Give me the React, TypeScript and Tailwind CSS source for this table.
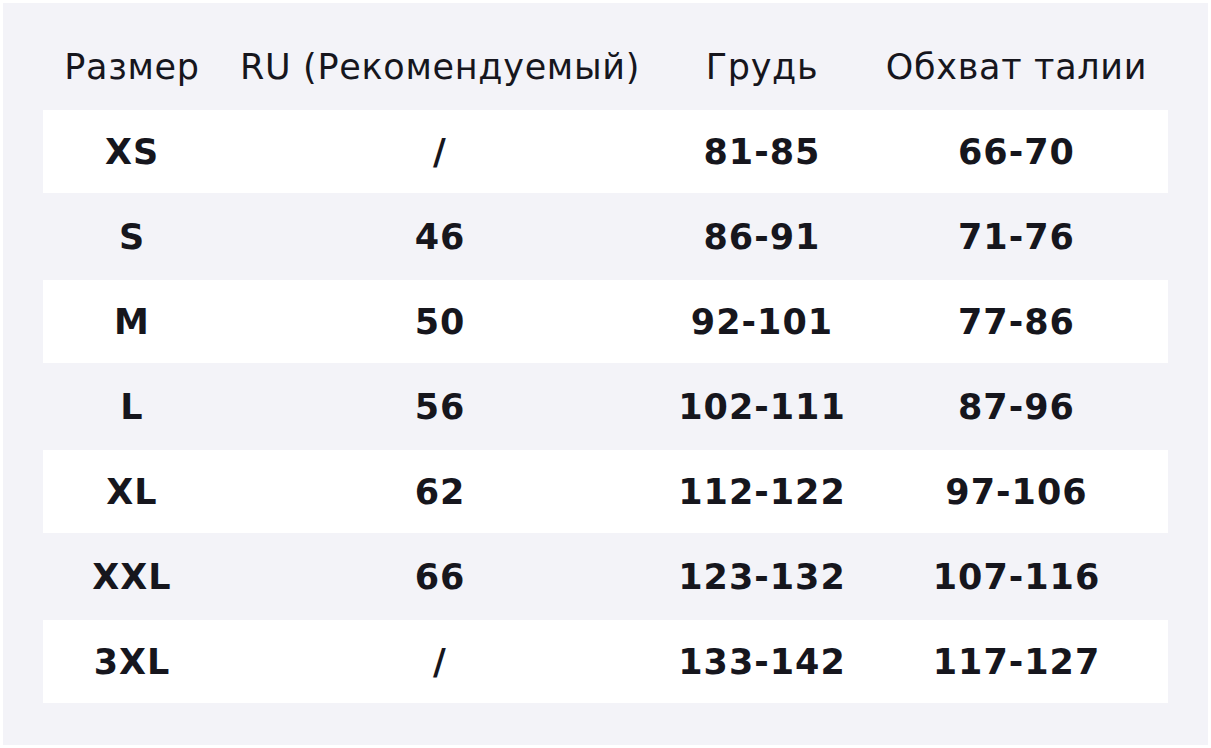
import React from "react";

const rows = [
  ["XS", "/", "81-85", "66-70"],
  ["S", "46", "86-91", "71-76"],
  ["M", "50", "92-101", "77-86"],
  ["L", "56", "102-111", "87-96"],
  ["XL", "62", "112-122", "97-106"],
  ["XXL", "66", "123-132", "107-116"],
  ["3XL", "/", "133-142", "117-127"],
];

const widths = ["w-[178px]", "w-[438px]", "w-[206px]", "w-[303px]"];

export default function App() {
  return (
    <div className="w-[1211px] h-[748px] bg-white p-[3px] pr-[3px]" style={{ fontFamily: '"DejaVu Sans", sans-serif' }}>
      <div className="w-[1205px] h-[742px] bg-[#f3f3f8] pl-[40px] text-[#16161d]">
        <div className="flex h-[107px] items-center pt-[21px] text-[35px] tracking-[0.7px]">
          {["Размер", "RU (Рекомендуемый)", "Грудь", "Обхват талии"].map((h, i) => (
            <div key={i} className={`${widths[i]} text-center`}>{h}</div>
          ))}
        </div>
        {rows.map((r, ri) => (
          <div
            key={ri}
            className={`flex w-[1125px] items-center pt-[2px] font-bold text-[35px] tracking-[1px] ${ri % 2 === 0 ? "bg-white h-[83px]" : "h-[87px]"}`}
          >
            {r.map((c, ci) => (
              <div key={ci} className={`${widths[ci]} text-center`}>{c}</div>
            ))}
          </div>
        ))}
      </div>
    </div>
  );
}
